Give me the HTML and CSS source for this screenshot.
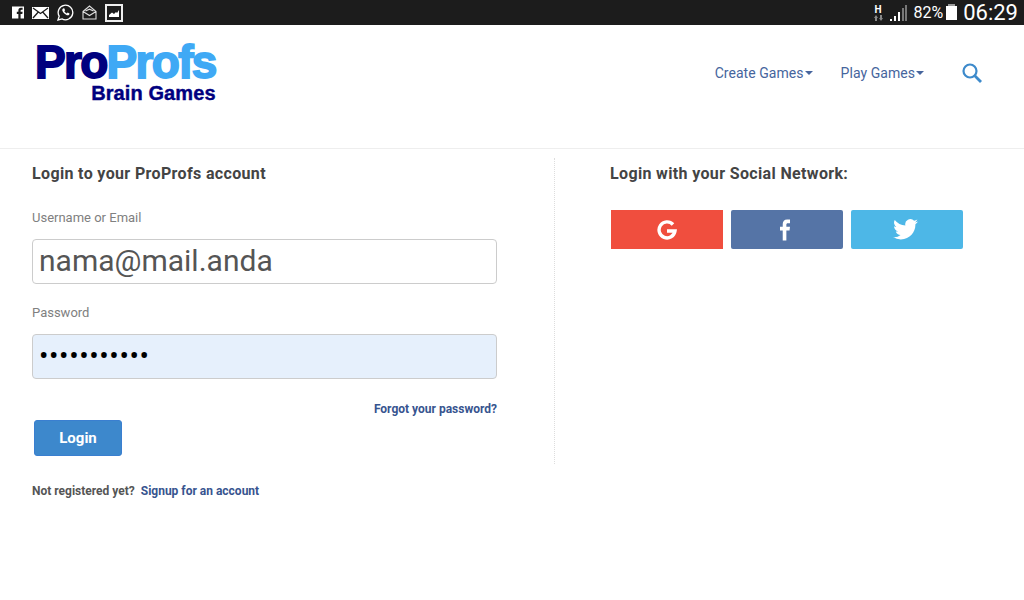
FILE: index.html
```html
<!DOCTYPE html>
<html>
	<head>
		<title>ProProfs Brain Games - Login</title>
		<link rel="stylesheet" href="styles.css">
	</head>
	<body>
		<div class="status-bar">
			<div class="status-icons">
				<svg class="ic" width="12" height="13" viewBox="0 0 13 13"><path fill="#fff" d="M0 0h13v13H9.300V8h1.900l.3-2.200H9.300V4.400c0-.7.300-1 1-1h1.200V1.400H9.700C7.800 1.400 6.900 2.500 6.900 4.200v1.600H5.200V8h1.700v5H0z"/></svg>
				<svg class="ic" width="17" height="12" viewBox="0 0 17 12"><path fill="#fff" d="M0 0h17v12H0z"/><path fill="none" stroke="#1c1c1c" stroke-width="1.300" d="M1 1l7.500 5.500L16 1M1 11l5.300-6M16 11l-5.300-6"/></svg>
				<svg class="ic" width="17" height="17" viewBox="0 0 17 17"><path fill="none" stroke="#fff" stroke-width="1.300" d="M1 16l1.200-3.800A7.300 7.300 0 1 1 5 14.900z"/><path fill="#fff" d="M6 4.500l1.200-.3.900 2-.8 1c.6 1 1.400 1.700 2.400 2.200l1-.9 1.800 1-.3 1.200c-.6.700-1.500.8-2.300.5-2.200-.8-3.900-2.400-4.600-4.600-.2-.8 0-1.500.7-2.100z"/></svg>
				<svg class="ic" width="15" height="15" viewBox="0 0 15 15"><path fill="none" stroke="#ddd" stroke-width="1.100" d="M1 6.500L7.500 1 14 6.500V14H1zM1 6.500l6.500 4 6.500-4M3.500 6l4-1.800 4 1.800"/></svg>
				<svg class="ic" width="18" height="18" viewBox="0 0 18 18"><path fill="#1c1c1c" stroke="#eee" stroke-width="2" d="M1 1h16v16H1z"/><path fill="#fff" d="M4 13v-2l3-2.500 2 1.500 2-2 1 1 2-3v7z"/></svg>
			</div>
			<div class="status-right">
				<div class="net"><b>H</b><svg width="9" height="6" viewBox="0 0 9 6"><path fill="#888" d="M2 0l2 3H3v3H1V3H0zM7 6L5 3h1V0h2v3h1z"/></svg></div>
				<svg class="signal" width="17" height="17" viewBox="0 0 17 17"><path fill="#fff" d="M0 15h2v2H0zM4 12h2v5H4zM8 8h2v9H8z"/><path fill="#777" d="M12 4h2v13h-2zM15 1h2v16h-2z"/></svg>
				<span class="pct">82%</span>
				<div class="battery"></div>
				<span class="clock">06:29</span>
			</div>
		</div>

		<div class="header">
			<a class="logo" href="#">
				<div class="logo-top"><span class="dark">Pro</span><span class="light">Profs</span></div>
				<div class="logo-sub">Brain Games</div>
			</a>
			<div class="nav">
				<a href="#">Create Games<i class="caret"></i></a>
				<a href="#">Play Games<i class="caret"></i></a>
				<svg class="search" width="20" height="20" viewBox="0 0 20 20"><circle cx="8" cy="8" r="6.500" fill="none" stroke="#3d8acb" stroke-width="2.200"/><path d="M12.800 12.800L19 19" stroke="#3d8acb" stroke-width="2.800"/></svg>
			</div>
		</div>

		<div class="content">
			<div class="left">
				<h2>Login to your ProProfs account</h2>
				<form>
					<label class="first">Username or Email</label>
					<input class="field" type="text" value="nama@mail.anda">
					<label class="second">Password</label>
					<input class="field pass" type="password" value="abcdefghijk">
					<div class="forgot"><a href="#">Forgot your password?</a></div>
					<button class="login" type="button">Login</button>
				</form>
			</div>
			<div class="right">
				<h2>Login with your Social Network:</h2>
				<div class="socials">
					<a class="soc google" href="#"><svg width="20" height="20" viewBox="0 0 20 20"><path fill="none" stroke="#fff" stroke-width="3.400" d="M16 4.500A8 8 0 1 0 18 11H10"/></svg></a>
					<a class="soc fb" href="#"><svg width="10" height="22" viewBox="0 0 11 23"><path fill="#fff" d="M3 23V12H0V8h3V5c0-3 1.800-5 4.800-5H11v4H8.600C7.500 4 7 4.600 7 5.600V8h4l-.5 4H7v11z"/></svg></a>
					<a class="soc tw" href="#"><svg width="25" height="21" viewBox="0 0 24 20"><path fill="#fff" d="M24 2.400c-.9.400-1.800.7-2.800.8 1-.6 1.800-1.600 2.200-2.700-1 .6-2 1-3.100 1.200A4.900 4.900 0 0 0 11.900 6.200 14 14 0 0 1 1.700.9a4.900 4.900 0 0 0 1.500 6.600c-.8 0-1.600-.2-2.200-.6 0 2.400 1.700 4.400 3.900 4.900-.7.200-1.500.2-2.200.1.600 2 2.400 3.400 4.600 3.400A9.900 9.900 0 0 1 0 17.300 14 14 0 0 0 7.500 19.500c9.100 0 14.300-7.700 14-14.600 1-.7 1.800-1.500 2.500-2.500z"/></svg></a>
				</div>
			</div>
		</div>
		<div class="signup">Not registered yet? <a href="#">Signup for an account</a></div>
	</body>
</html>
```

FILE: styles.css
```css
html, body{
	margin:0;
	padding:0;
	background-color:#ffffff;
	font-family:Roboto, "Liberation Sans", sans-serif;
	overflow:hidden;
}
a{
	text-decoration:none;
}

/* status bar */
.status-bar{
	height:25px;
	background-color:#1c1c1c;
	display:flex;
	justify-content:space-between;
	align-items:center;
	color:#ffffff;
}
.status-icons{
	display:flex;
	align-items:center;
	gap:8px;
	padding-left:12px;
}
.status-right{
	display:flex;
	align-items:center;
	padding-right:6px;
}
.net{
	display:flex;
	flex-direction:column;
	align-items:center;
	width:11px;
	line-height:10px;
	font-size:10px;
	margin-right:6px;
}
.signal{
	margin-right:7px;
}
.pct{
	font-size:16px;
	margin-right:3px;
}
.battery{
	width:11px;
	height:14px;
	background-color:#ffffff;
	margin-right:6px;
	position:relative;
}
.battery:before{
	content:"";
	position:absolute;
	left:2px;
	top:-2px;
	width:7px;
	height:2px;
	background-color:#999999;
}
.clock{
	font-size:22px;
}

/* header */
.header{
	height:123px;
	border-bottom:1px solid #eeeeee;
	display:flex;
	justify-content:space-between;
	align-items:flex-start;
}
.logo{
	display:block;
	margin:18px 0 0 35px;
	font-family:"Liberation Sans", sans-serif;
	font-weight:bold;
}
.logo-top{
	font-size:46px;
	line-height:39px;
	letter-spacing:-1.700px;
	-webkit-text-stroke:1.800px;
}
.dark{
	color:#00007f;
}
.light{
	color:#3fa9f5;
}
.logo-sub{
	font-size:20px;
	line-height:20px;
	text-align:right;
	color:#00007f;
	-webkit-text-stroke:0.400px;
	letter-spacing:0.100px;
	margin-top:1px;
}
.nav{
	display:flex;
	align-items:center;
	margin:38px 42px 0 0;
}
.nav a{
	color:#46659d;
	font-size:14px;
	letter-spacing:0.050px;
	margin-right:28px;
	display:flex;
	align-items:center;
}
.caret{
	display:inline-block;
	border-top:4px solid #46659d;
	border-left:4px solid transparent;
	border-right:4px solid transparent;
	margin-left:1px;
}
.search{
	margin-left:10px;
}

/* login */
.content{
	display:flex;
	margin-top:9px;
	height:306px;
}
h2{
	margin:0;
	padding-top:6px;
	font-size:16px;
	line-height:20px;
	font-weight:700;
	color:#444444;
	letter-spacing:0.350px;
}
.left{
	width:465px;
	padding:0 57px 0 32px;
	border-right:1px dotted #dddddd;
}
label{
	display:block;
	font-size:13px;
	line-height:16px;
	color:#808080;
}
label.first{
	margin-top:26px;
	margin-bottom:13px;
}
label.second{
	margin-top:21px;
	margin-bottom:13px;
}
.field{
	display:block;
	box-sizing:border-box;
	width:465px;
	height:45px;
	border:1px solid #cccccc;
	border-radius:4px;
	padding:0 6px 2px;
	font-family:Roboto, sans-serif;
	font-size:30px;
	color:#555555;
	outline:none;
}
.pass{
	background-color:#e6f0fc;
	color:#000000;
	font-size:28px;
	letter-spacing:0.600px;
}
.forgot{
	text-align:right;
	margin-top:22px;
	font-size:12px;
	line-height:16px;
	font-weight:700;
}
.forgot a, .signup a{
	color:#37548f;
}
.login{
	display:block;
	width:88px;
	height:36px;
	margin:3px 0 0 2px;
	background-color:#3d88cc;
	border:1px solid #3a7fd0;
	border-radius:3px;
	color:#ffffff;
	font-family:Roboto, sans-serif;
	font-size:15px;
	font-weight:700;
	padding:0;
}
.right{
	padding-left:55px;
}
.socials{
	display:flex;
	gap:8px;
	margin:26px 0 0 1px;
}
.soc{
	width:112px;
	height:39px;
	display:flex;
	align-items:center;
	justify-content:center;
	border-radius:2px;
}
.google{
	background-color:#f04e3e;
	border-radius:0;
}
.fb{
	background-color:#5574a6;
	padding-right:4px;
	box-sizing:border-box;
}
.tw{
	background-color:#4db7e7;
	padding-right:4px;
	box-sizing:border-box;
}
.signup{
	margin:19px 0 0 32px;
	font-size:12px;
	line-height:16px;
	font-weight:700;
	color:#555555;
}
.signup a{
	margin-left:3px;
}
```
